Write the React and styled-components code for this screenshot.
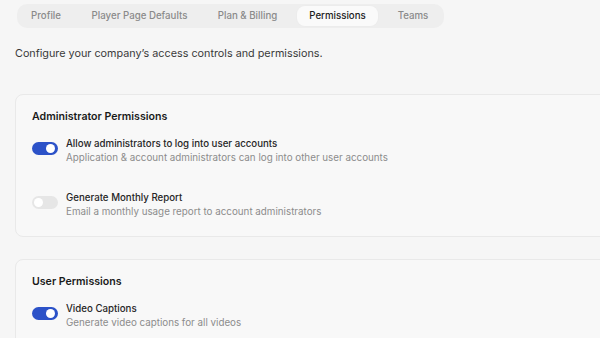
import React from "react";
import styled, { createGlobalStyle } from "styled-components";

const GlobalStyle = createGlobalStyle`
  html, body {
    margin: 0;
    padding: 0;
    background: #f6f6f6;
    font-family: Inter, "Liberation Sans", sans-serif;
    color: #1f1f1f;
    overflow: hidden;
  }
`;

const Page = styled.div`
  width: 600px;
  height: 338px;
  overflow: hidden;
  padding: 3px 0 0 15px;
  box-sizing: border-box;
`;

const Tabs = styled.nav`
  display: inline-flex;
  align-items: center;
  height: 24px;
  padding: 0 2px;
  margin-left: 2px;
  background: #eeeeee;
  border-radius: 10px;
`;

const Tab = styled.div`
  width: ${(p) => p.$w}px;
  height: 20px;
  display: flex;
  align-items: center;
  justify-content: center;
  box-sizing: border-box;
  padding: 0 ${(p) => p.$pr || 0}px 0 ${(p) => p.$pl || 0}px;
  border-radius: 8px;
  font-size: 9.7px;
  font-weight: 500;
  color: ${(p) => (p.$active ? "#1c1c1c" : "#8a8a8a")};
  background: ${(p) => (p.$active ? "#fafafa" : "transparent")};
  box-shadow: ${(p) => (p.$active ? "0 0 0 1px #ececec" : "none")};
`;

const Intro = styled.p`
  margin: 19px 0 0;
  font-size: 10.8px;
  color: #3a3a3a;
`;

const Card = styled.section`
  margin-top: ${(p) => p.$top}px;
  margin-right: -20px;
  padding: 15px 16px 18px;
  background: #f8f8f8;
  border: 1px solid #e9e9e9;
  border-radius: 8px;
`;

const CardTitle = styled.h3`
  margin: 0 0 13px;
  font-size: 10.6px;
  line-height: 14px;
  font-weight: 600;
  color: #1a1a1a;
`;

const Rows = styled.div`
  display: flex;
  flex-direction: column;
  gap: 27px;
`;

const Row = styled.div`
  display: flex;
  align-items: flex-start;
  gap: 8px;
`;

const Switch = styled.span`
  position: relative;
  flex: none;
  width: 26px;
  height: 13px;
  margin-top: 5px;
  border-radius: 7px;
  background: ${(p) => (p.$on ? "#2c52c8" : "#e6e6e6")};
  &::after {
    content: "";
    position: absolute;
    top: 2px;
    left: ${(p) => (p.$on ? 14 : 2)}px;
    width: 9px;
    height: 9px;
    border-radius: 50%;
    background: #fff;
  }
`;

const Text = styled.div`
  display: flex;
  flex-direction: column;
  gap: 1px;
`;

const Label = styled.div`
  font-size: 9.7px;
  line-height: 13px;
  font-weight: 500;
  color: #262626;
`;

const Desc = styled.div`
  font-size: 9.8px;
  line-height: 13px;
  color: #8c8c8c;
`;

const tabs = [
  { title: "Profile", w: 54 },
  { title: "Player Page Defaults", w: 133 },
  { title: "Plan & Billing", w: 91, pr: 8 },
  { title: "Permissions", w: 81, active: true },
  { title: "Teams", w: 64, pl: 6 },
];

const adminRows = [
  {
    on: true,
    label: "Allow administrators to log into user accounts",
    desc: "Application & account administrators can log into other user accounts",
  },
  {
    on: false,
    label: "Generate Monthly Report",
    desc: "Email a monthly usage report to account administrators",
  },
];

const userRows = [
  {
    on: true,
    label: "Video Captions",
    desc: "Generate video captions for all videos",
  },
];

const SettingRow = ({ on, label, desc }) => (
  <Row>
    <Switch $on={on} />
    <Text>
      <Label>{label}</Label>
      <Desc>{desc}</Desc>
    </Text>
  </Row>
);

export default function App() {
  return (
    <>
      <GlobalStyle />
      <Page>
        <Tabs>
          {tabs.map((t) => (
            <Tab key={t.title} $active={t.active} $w={t.w} $pl={t.pl} $pr={t.pr}>
              {t.title}
            </Tab>
          ))}
        </Tabs>
        <Intro>Configure your company’s access controls and permissions.</Intro>
        <Card $top={34}>
          <CardTitle>Administrator Permissions</CardTitle>
          <Rows>
            {adminRows.map((r) => (
              <SettingRow key={r.label} {...r} />
            ))}
          </Rows>
        </Card>
        <Card $top={22}>
          <CardTitle>User Permissions</CardTitle>
          <Rows>
            {userRows.map((r) => (
              <SettingRow key={r.label} {...r} />
            ))}
          </Rows>
        </Card>
      </Page>
    </>
  );
}
